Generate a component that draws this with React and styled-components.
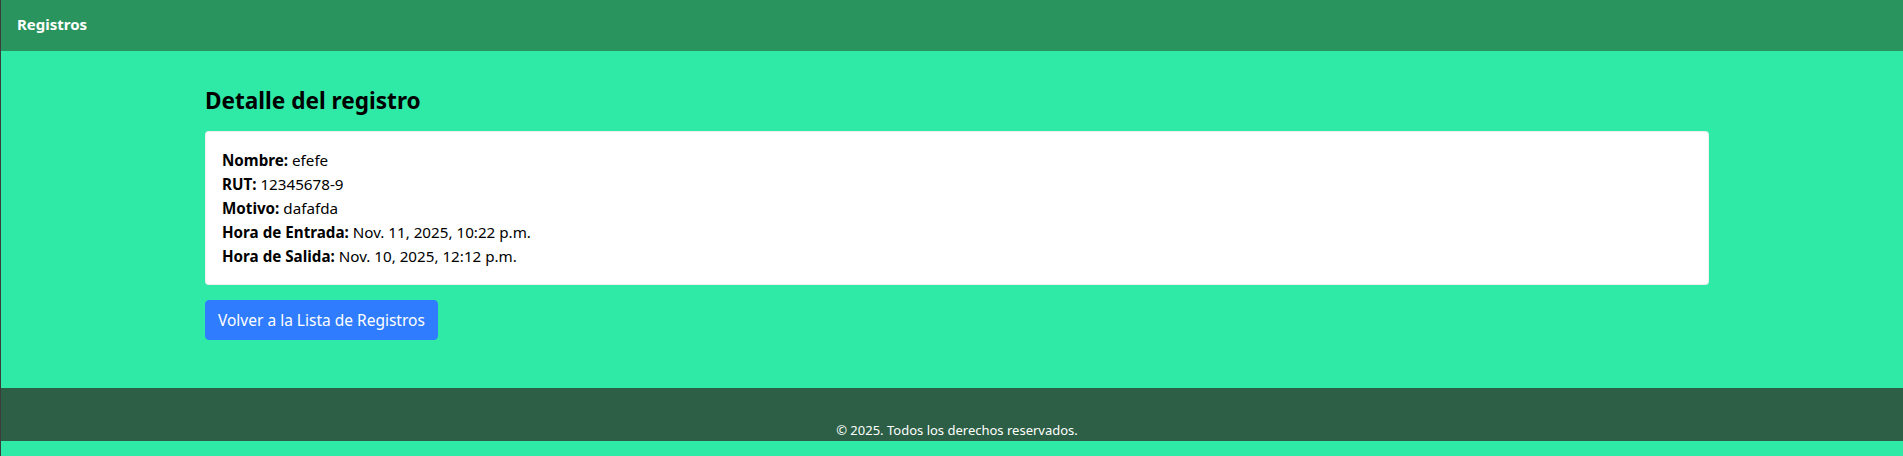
import React from "react";
import styled, { createGlobalStyle } from "styled-components";

const Global = createGlobalStyle`
  html, body { margin: 0; padding: 0; }
  body {
    background: #2eeaa6;
    font-family: "Noto Sans", "Open Sans", sans-serif;
    color: #000;
    border-left: 1px solid #3a3d3c;
  }
  * { box-sizing: border-box; }
`;

const Page = styled.div`
  display: flex;
  flex-direction: column;
  padding-bottom: 16px;
`;

const NavBar = styled.nav`
  height: 51px;
  background: #29945e;
  display: flex;
  align-items: center;
  padding: 0 16px;
`;

const Brand = styled.a`
  color: #fff;
  font-weight: 700;
  font-size: 15px;
  text-decoration: none;
  line-height: 24px;
  margin-top: -4px;
`;

const Main = styled.main`
  padding: 36px 0 48px 204px;
`;

const Content = styled.div`
  width: 1504px;
  display: flex;
  flex-direction: column;
  align-items: flex-start;
`;

const Title = styled.h4`
  margin: 0 0 15px;
  font-size: 22.6px;
  font-weight: 700;
  line-height: 28.8px;
`;

const Card = styled.div`
  align-self: stretch;
  background: #fff;
  border: 1px solid rgba(0, 0, 0, 0.06);
  border-radius: 4px;
  padding: 16px;
`;

const Row = styled.p`
  margin: 0;
  font-size: 15.2px;
  line-height: 24px;
`;

const Label = styled.strong`
  font-weight: 700;
`;

const Button = styled.a`
  margin-top: 15px;
  display: inline-block;
  background: #2f7cfe;
  color: #fff;
  border: 1px solid #2f7cfe;
  border-radius: 4px;
  padding: 7px 12px;
  font-size: 15.5px;
  line-height: 24px;
  text-decoration: none;
`;

const Footer = styled.footer`
  background: #2c5f45;
  height: 53px;
  padding: 32px 0 0 10px;
  text-align: center;
`;

const FooterText = styled.p`
  margin: 0;
  color: #fff;
  font-size: 13px;
  line-height: 21px;
`;

const rows = [
  ["Nombre:", "efefe"],
  ["RUT:", "12345678-9"],
  ["Motivo:", "dafafda"],
  ["Hora de Entrada:", "Nov. 11, 2025, 10:22 p.m."],
  ["Hora de Salida:", "Nov. 10, 2025, 12:12 p.m."],
];

export default function App() {
  return (
    <>
      <Global />
      <Page>
        <NavBar>
          <Brand href="#">Registros</Brand>
        </NavBar>
        <Main>
          <Content>
            <Title>Detalle del registro</Title>
            <Card>
              {rows.map(([k, v]) => (
                <Row key={k}>
                  <Label>{k}</Label> {v}
                </Row>
              ))}
            </Card>
            <Button href="#">Volver a la Lista de Registros</Button>
          </Content>
        </Main>
        <Footer>
          <FooterText>© 2025. Todos los derechos reservados.</FooterText>
        </Footer>
      </Page>
    </>
  );
}
